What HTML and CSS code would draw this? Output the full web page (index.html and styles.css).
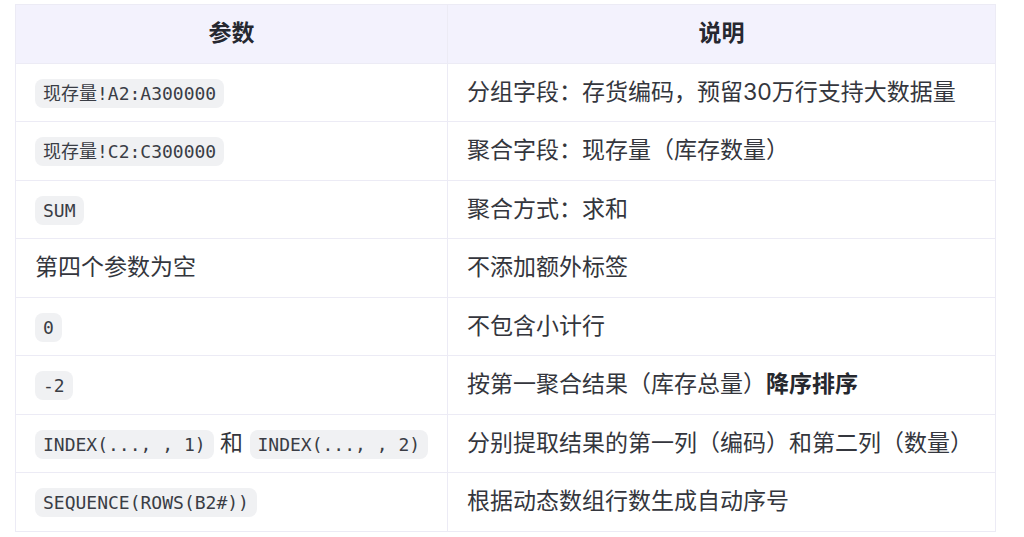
FILE: index.html
```html
<!DOCTYPE html>
<html lang="zh-CN">
<head>
<meta charset="utf-8">
<title>参数说明</title>
<link rel="stylesheet" href="styles.css">
</head>
<body>
<table class="params">
  <colgroup>
    <col class="col-param">
    <col class="col-desc">
  </colgroup>
  <thead>
    <tr><th>参数</th><th>说明</th></tr>
  </thead>
  <tbody>
    <tr><td><code>现存量!A2:A300000</code></td><td>分组字段：存货编码，预留30万行支持大数据量</td></tr>
    <tr><td><code>现存量!C2:C300000</code></td><td>聚合字段：现存量（库存数量）</td></tr>
    <tr><td><code>SUM</code></td><td>聚合方式：求和</td></tr>
    <tr><td>第四个参数为空</td><td>不添加额外标签</td></tr>
    <tr><td><code>0</code></td><td>不包含小计行</td></tr>
    <tr><td><code>-2</code></td><td>按第一聚合结果（库存总量）<strong>降序排序</strong></td></tr>
    <tr><td><code>INDEX(..., , 1)</code> 和 <code>INDEX(..., , 2)</code></td><td>分别提取结果的第一列（编码）和第二列（数量）</td></tr>
    <tr><td><code>SEQUENCE(ROWS(B2#))</code></td><td>根据动态数组行数生成自动序号</td></tr>
  </tbody>
</table>
</body>
</html>
```
FILE: styles.css
```css
html, body {
  margin: 0;
  padding: 0;
  background: #ffffff;
}

body {
  padding: 4px 0 0 15px;
  font-family: "Inter", "Noto Sans CJK SC", sans-serif;
  color: #34363d;
}

.params {
  border-collapse: collapse;
  width: 980px;
  table-layout: fixed;
  font-size: 23px;
}

.col-param { width: 432px; }
.col-desc { width: 548px; }

.params th,
.params td {
  border: 1px solid #ecebf5;
  padding: 12px 19px;
  line-height: 33.5px;
  text-align: left;
  white-space: nowrap;
}

.params th {
  background: #f3f2fd;
  font-weight: 700;
  text-align: center;
  color: #262830;
}

.params td strong {
  font-weight: 700;
  color: #26282e;
}

.params code {
  font-family: "DejaVu Sans Mono", "Noto Sans CJK SC", monospace;
  font-size: 18px;
  background: #f0f1f3;
  color: #3a3d45;
  border-radius: 8px;
  padding: 4px 8px;
  line-height: 22px;
}
```
